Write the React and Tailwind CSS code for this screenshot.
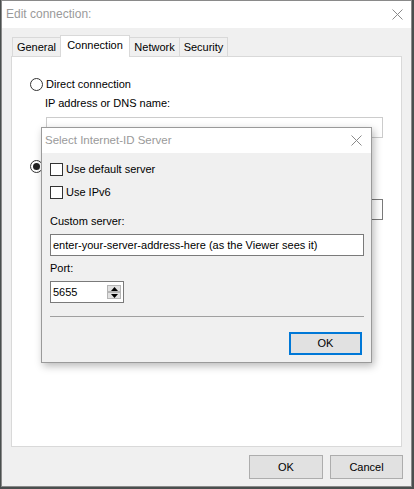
import React from "react";

const XIcon = () => (
  <svg width="11" height="11" viewBox="0 0 11 11" className="text-[#8a8a8a]">
    <path d="M0.5 0.5L10.5 10.5M10.5 0.5L0.5 10.5" stroke="currentColor" strokeWidth="1" fill="none" />
  </svg>
);

const Radio = ({ checked }) => (
  <div className="w-[13px] h-[13px] rounded-full border border-[#333333] bg-white flex items-center justify-center shrink-0">
    {checked && <div className="w-[7px] h-[7px] rounded-full bg-[#222222]" />}
  </div>
);

const Check = () => <div className="w-[13px] h-[13px] border border-[#333333] bg-white shrink-0" />;

const Tab = ({ label, selected, w, first }) =>
  selected ? (
    <div className={`h-[22px] ${w} bg-white border border-b-0 border-[#d9d9d9] flex items-start justify-center pt-[2px] -ml-px`}>
      {label}
    </div>
  ) : (
    <div className={`h-[20px] ${w} bg-[#f0f0f0] border border-[#d9d9d9] flex items-center justify-center ${first ? "" : "-ml-px"}`}>
      {label}
    </div>
  );

export default function App() {
  return (
    <div className="w-[414px] h-[489px] bg-[#4a4f4e] pl-px overflow-hidden font-['Liberation_Sans',Arial,sans-serif] text-[11px] leading-[15px] text-black">
      <div className="relative w-[411px] h-[487px] border border-[#8a8a8a] bg-[#f0f0f0] flex flex-col">
        {/* Title bar */}
        <div className="h-[27px] bg-white flex items-center justify-between pl-[4px] pr-[8px] shrink-0">
          <span className="text-[12px] text-[#9a9a9a]">Edit connection:</span>
          <XIcon />
        </div>

        {/* Body */}
        <div className="flex flex-col pl-[9px] pr-[9px] pt-[7px]">
          <div className="flex items-end ml-px -mb-px relative z-10">
            <Tab label="General" w="w-[49px]" first />
            <Tab label="Connection" w="w-[70px]" selected />
            <Tab label="Network" w="w-[51px]" />
            <Tab label="Security" w="w-[49px]" />
          </div>
          <div className="h-[391px] bg-white border border-[#d9d9d9] flex flex-col pl-[18px]">
            <div className="mt-[21px] h-[13px] flex items-center gap-[3px]">
              <Radio />
              <span>Direct connection</span>
            </div>
            <div className="mt-[5px] ml-[15px]">IP address or DNS name:</div>
            <div className="mt-[6px] ml-[16px] w-[337px] h-[21px] border border-[#cccccc] bg-white" />
            <div className="mt-[22px] h-[13px] flex items-center gap-[3px]">
              <Radio checked />
            </div>
            <div className="mt-[5px] h-[15px]" />
            <div className="mt-[6px] ml-[16px] w-[337px] h-[21px] border border-[#7a7a7a] bg-white" />
          </div>
          <div className="mt-[8px] flex justify-end gap-[7px] -mr-px">
            <button className="w-[74px] h-[24px] bg-[#e1e1e1] border border-[#adadad] flex items-center justify-center">OK</button>
            <button className="w-[73px] h-[24px] bg-[#e1e1e1] border border-[#adadad] flex items-center justify-center">Cancel</button>
          </div>
        </div>

        {/* Overlay dialog */}
        <div className="absolute left-[39px] top-[126px] w-[331px] h-[236px] border border-[#9a9a9a] bg-[#f0f0f0] flex flex-col shadow-[2px_3px_8px_rgba(0,0,0,0.28)] z-20">
          <div className="h-[25px] bg-white flex items-center justify-between pl-[3px] pr-[9px] shrink-0">
            <span className="text-[11.5px] text-[#9a9a9a]">Select Internet-ID Server</span>
            <XIcon />
          </div>
          <div className="flex flex-col pl-[8px] pr-[7px]">
            <div className="mt-[10px] h-[13px] flex items-center gap-[3px]">
              <Check />
              <span>Use default server</span>
            </div>
            <div className="mt-[10px] h-[13px] flex items-center gap-[3px]">
              <Check />
              <span>Use IPv6</span>
            </div>
            <div className="mt-[15px]">Custom server:</div>
            <div className="mt-[5px] h-[22px] border border-[#7a7a7a] bg-white flex items-center pl-[2px]">
              enter-your-server-address-here (as the Viewer sees it)
            </div>
            <div className="mt-[5px]">Port:</div>
            <div className="mt-[5px] w-[74px] h-[22px] border border-[#7a7a7a] bg-white flex items-center justify-between pl-[2px] pr-[2px]">
              <span>5655</span>
              <div className="flex flex-col">
                <div className="w-[14px] h-[7px] bg-[#e1e1e1] border border-[#b5b5b5] flex items-center justify-center">
                  <svg width="7" height="4" viewBox="0 0 7 4"><path d="M3.5 0L7 4H0Z" fill="#000" /></svg>
                </div>
                <div className="w-[14px] h-[7px] bg-[#e1e1e1] border border-[#b5b5b5] flex items-center justify-center">
                  <svg width="7" height="4" viewBox="0 0 7 4"><path d="M0 0H7L3.5 4Z" fill="#000" /></svg>
                </div>
              </div>
            </div>
            <div className="mt-[13px] h-px bg-[#a0a0a0]" />
            <div className="mt-[15px] flex justify-end mr-[2px]">
              <button className="w-[73px] h-[23px] bg-[#e1e1e1] border-2 border-[#0078d7] flex items-center justify-center">OK</button>
            </div>
          </div>
        </div>
      </div>
    </div>
  );
}
